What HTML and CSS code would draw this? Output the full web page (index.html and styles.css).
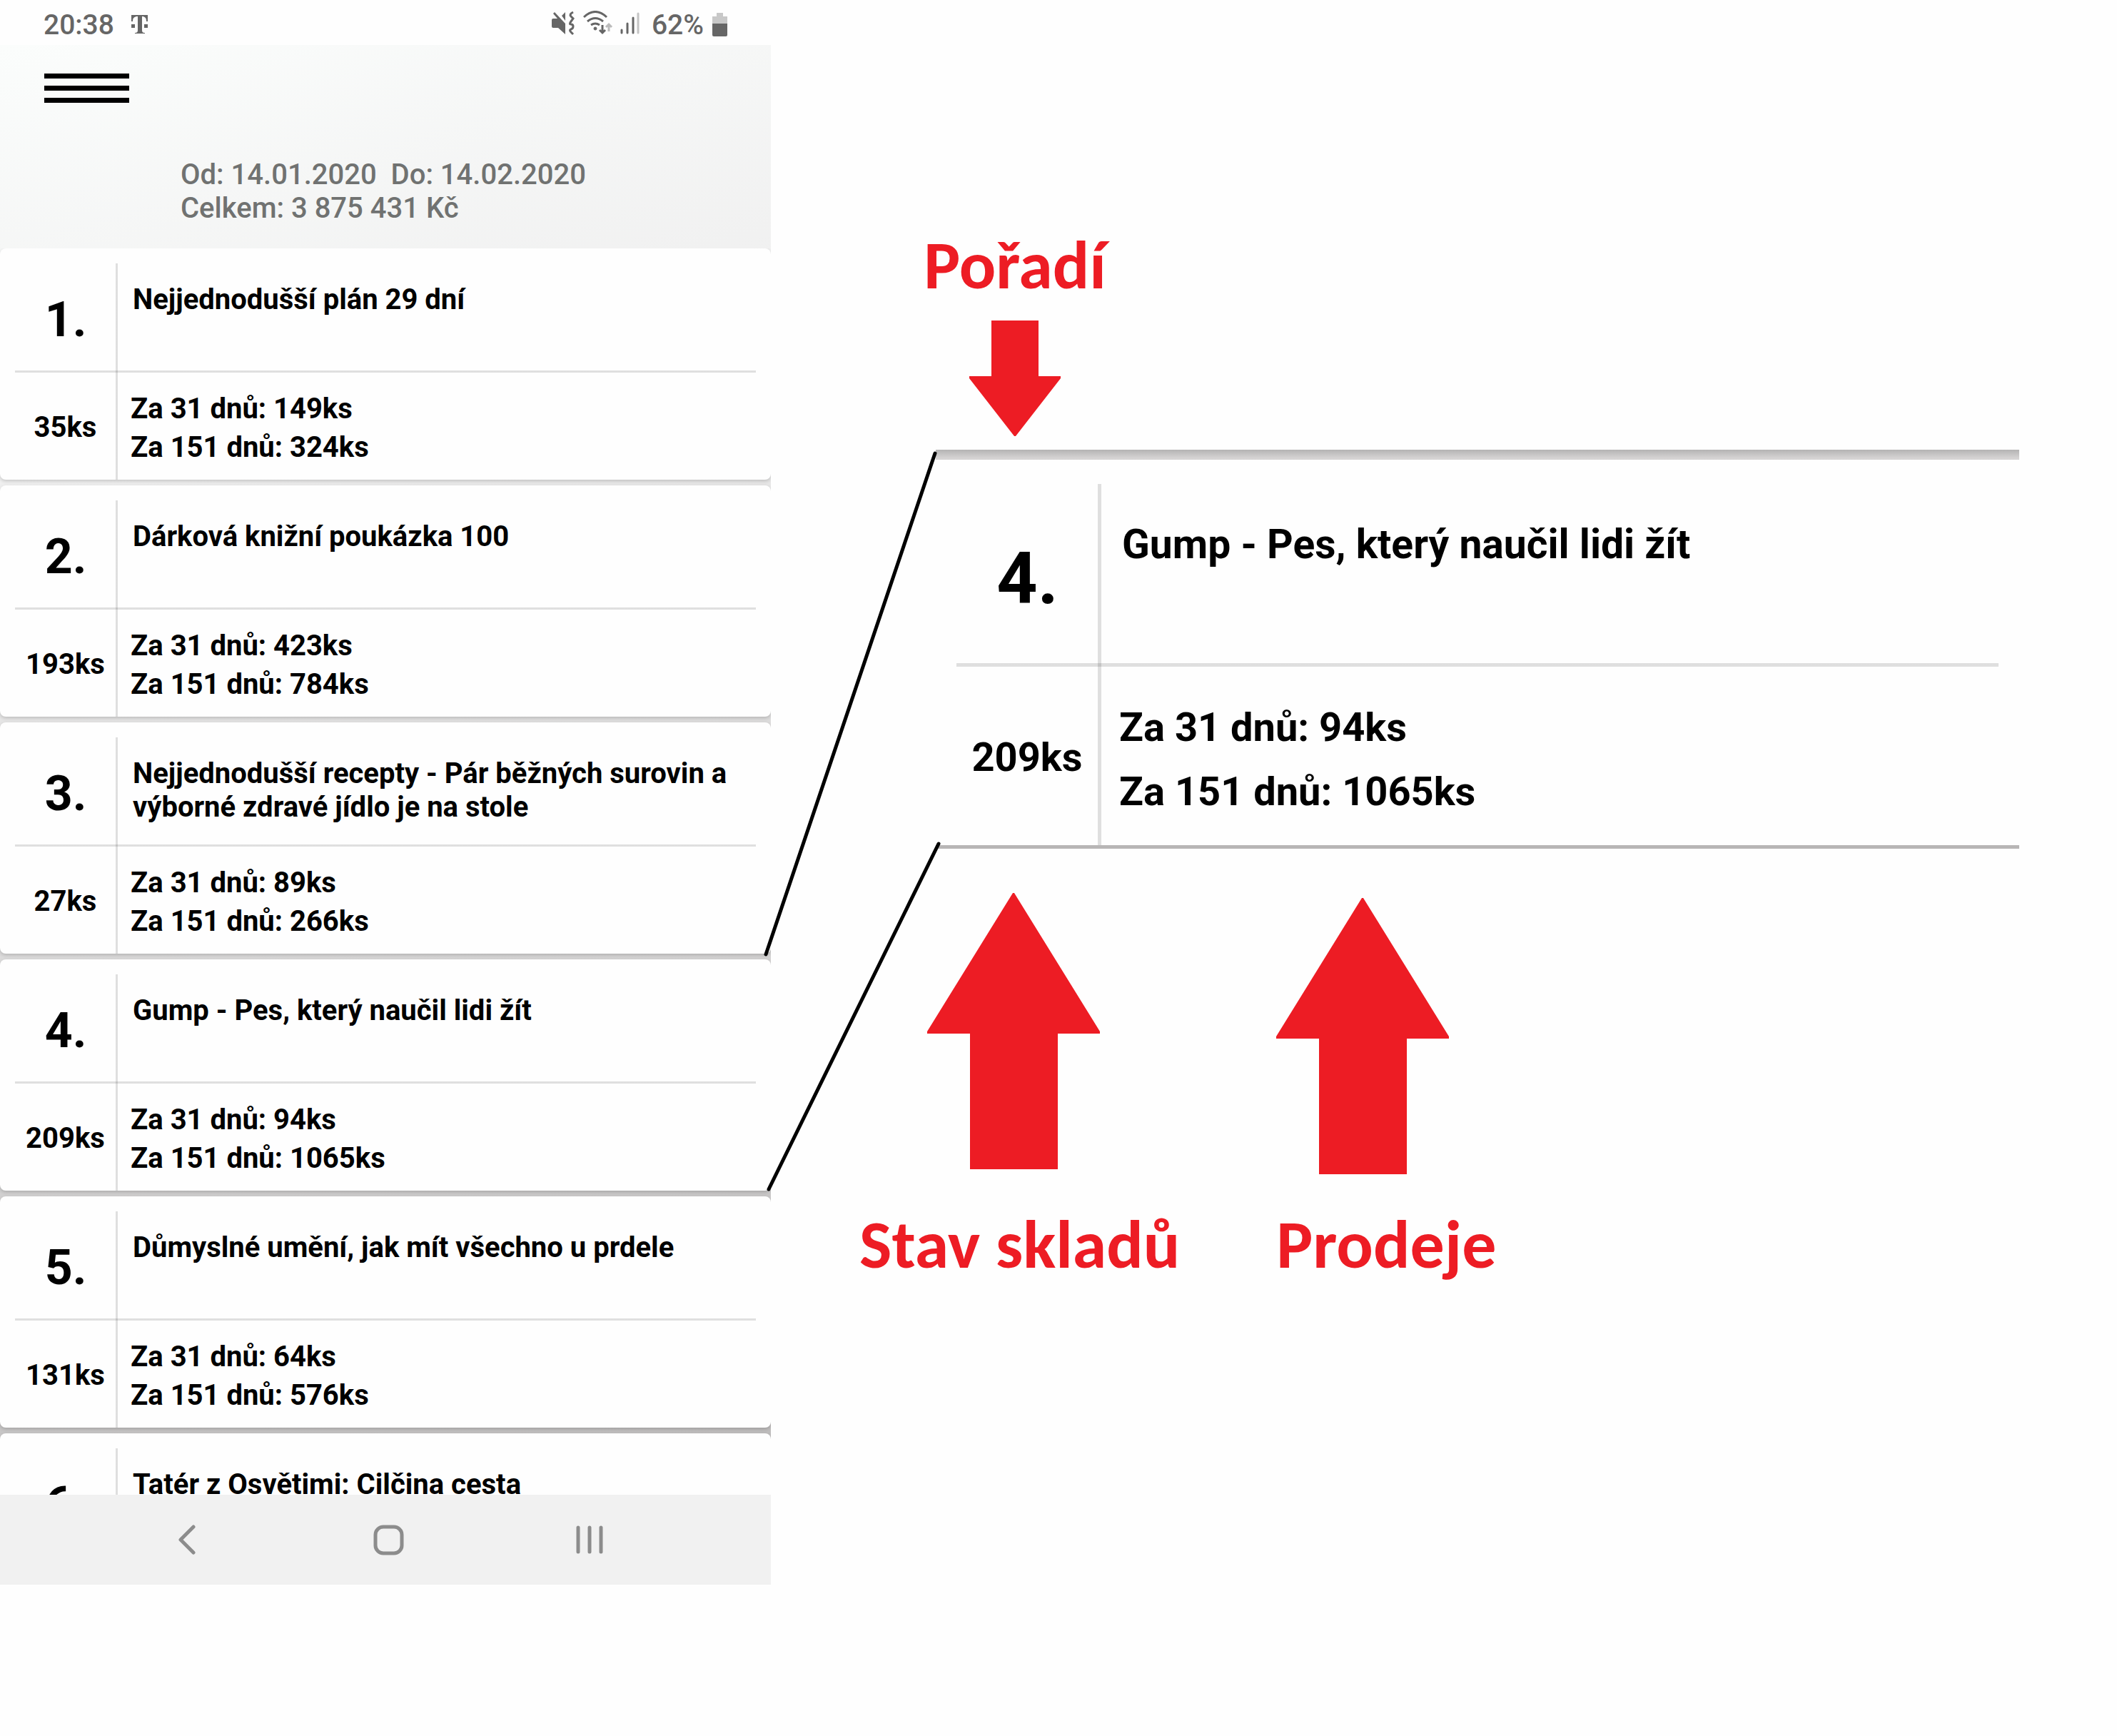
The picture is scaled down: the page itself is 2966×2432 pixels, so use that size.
FILE: index.html
```html
<!DOCTYPE html>
<html lang="cs">
<head>
<meta charset="utf-8">
<title>Prodeje</title>
<link rel="stylesheet" href="styles.css">
</head>
<body>
<main class="page">
  <section class="phone">
    <header class="status">
      <span>20:38</span>
      <svg class="carrier" width="24" height="28" viewBox="0 0 24 28" fill="#666"><path d="M0 0h23v9h-2c0-5-2-7-6-7v19c0 3 1 4 4 4v1H5v-1c3 0 4-1 4-4V2C4 2 2 4 2 9H0zM0 13h5v5H0zM18 13h5v5h-5z"/></svg>
      <div class="status-icons">
        <svg width="34" height="36" viewBox="0 0 34 36" fill="#666"><path d="M0 13q0-2 2-2h6L2 4l2-2 15 16v15L9 24H2q-2 0-2-2zM14 7l5-5v12z"/><path d="M30 2q-6 3-3 6t3 3-3 4 0 4 3 3-3 4 0 4l3 3" fill="none" stroke="#666" stroke-width="3"/></svg>
        <svg width="42" height="36" viewBox="0 0 42 36" fill="none" stroke="#666" stroke-width="3"><path d="M1 9Q17-6 33 9M6 15q11-9 22 0M11 20q6-4 12 0"/><circle cx="17" cy="25" r="2" fill="#666" stroke-width="1"/><path d="M27 20v11m-4-4 4 4 4-4"/><path d="M36 29V19m-4 4 4-4 4 4" stroke="#bbb"/></svg>
        <svg width="28" height="36" viewBox="0 0 28 36" fill="none" stroke="#666" stroke-width="3" stroke-linecap="round"><path d="M2 27v4M10 18v13M18 10v21"/><path d="M25 4v27" stroke="#c4c4c4"/></svg>
      </div>
      <span>62%</span>
      <svg class="battery" width="22" height="34" viewBox="0 0 22 34"><path d="M6 0h9v5h6v11H0V5h6z" fill="#c8c8c8"/><path d="M0 15h21v16q0 2-2 2H2q-2 0-2-2z" fill="#666"/></svg>
    </header>
    <div class="app">
      <div class="summary">
        <button class="menu" aria-label="Menu"><i></i><i></i><i></i></button>
        <p class="totals">Od: 14.01.2020&nbsp; Do: 14.02.2020<br>Celkem: 3 875 431 Kč</p>
      </div>
      <div class="list">
        <article class="card"><div class="rank">1.</div><h2 class="title">Nejjednodušší plán 29 dní</h2><div class="stock">35ks</div><p class="sales">Za 31 dnů: 149ks<br>Za 151 dnů: 324ks</p></article>
        <article class="card"><div class="rank">2.</div><h2 class="title">Dárková knižní poukázka 100</h2><div class="stock">193ks</div><p class="sales">Za 31 dnů: 423ks<br>Za 151 dnů: 784ks</p></article>
        <article class="card"><div class="rank">3.</div><h2 class="title">Nejjednodušší recepty - Pár běžných surovin a výborné zdravé jídlo je na stole</h2><div class="stock">27ks</div><p class="sales">Za 31 dnů: 89ks<br>Za 151 dnů: 266ks</p></article>
        <article class="card"><div class="rank">4.</div><h2 class="title">Gump - Pes, který naučil lidi žít</h2><div class="stock">209ks</div><p class="sales">Za 31 dnů: 94ks<br>Za 151 dnů: 1065ks</p></article>
        <article class="card"><div class="rank">5.</div><h2 class="title">Důmyslné umění, jak mít všechno u prdele</h2><div class="stock">131ks</div><p class="sales">Za 31 dnů: 64ks<br>Za 151 dnů: 576ks</p></article>
        <article class="card"><div class="rank">6.</div><h2 class="title">Tatér z Osvětimi: Cilčina cesta</h2></article>
      </div>
    </div>
    <nav class="navbar">
      <button aria-label="Zpět"><svg width="44" height="44" viewBox="0 0 44 44" fill="none" stroke="#8c8c8c" stroke-width="5" stroke-linecap="round" stroke-linejoin="round"><path d="M31 4 13 22l18 18"/></svg></button>
      <button aria-label="Domů"><svg width="44" height="44" viewBox="0 0 44 44" fill="none" stroke="#8c8c8c" stroke-width="5"><rect x="4" y="4" width="37" height="37" rx="11"/></svg></button>
      <button aria-label="Poslední aplikace"><svg width="44" height="44" viewBox="0 0 44 44" fill="none" stroke="#8c8c8c" stroke-width="5" stroke-linecap="round"><path d="M6 5v34M22 5v34M38 5v34"/></svg></button>
    </nav>
  </section>

  <section class="guide">
    <svg class="connectors" width="250" height="1042" viewBox="0 0 250 1042" fill="none" stroke="#000" stroke-width="5" stroke-linecap="round"><path d="M3 707 240 5M7 1036 245 552"/></svg>
    <div class="callout callout-top">
      <h1 class="label">Pořadí</h1>
      <svg width="128" height="162" viewBox="0 0 128 162" fill="#ed1c24"><path d="M31 0h66v78h31v3L65 162h-2L0 81v-3h31z"/></svg>
    </div>
    <article class="detail">
      <div class="rank">4.</div><h2 class="title">Gump - Pes, který naučil lidi žít</h2>
      <div class="stock">209ks</div><p class="sales">Za 31 dnů: 94ks<br>Za 151 dnů: 1065ks</p>
    </article>
    <div class="callouts">
      <div class="callout callout-stock">
        <svg width="242" height="388" viewBox="0 0 242 388" fill="#ed1c24"><path d="M120 0h2l120 194v3h-59v190H60V197H0v-3z"/></svg>
        <h1 class="label">Stav skladů</h1>
      </div>
      <div class="callout callout-sales">
        <svg width="242" height="388" viewBox="0 0 242 388" fill="#ed1c24"><path d="M120 0h2l120 194v3h-59v190H60V197H0v-3z"/></svg>
        <h1 class="label">Prodeje</h1>
      </div>
    </div>
  </section>
</main>
</body>
</html>
```
FILE: styles.css
```css
* { box-sizing: border-box; }
body { margin: 0; background: #fefefe; color: #000; font-family: Roboto, sans-serif; font-size: 40px; }
h1, h2, p { margin: 0; }
svg { display: block; flex: none; }
button { border: 0; padding: 0; background: none; }

.page { display: grid; grid-template-columns: minmax(0, 1080px) minmax(0, 1fr); align-items: start; }

.status { display: flex; align-items: center; height: 63px; padding: 6px 60px 0 61px; color: #666; font-size: 39px; font-weight: 500; }
.carrier { margin: 0 auto 0 24px; }
.status-icons { display: flex; gap: 10px; margin: 0 16px 4px 0; }
.battery { margin-left: 12px; }

.app { background: linear-gradient(165deg, #fbfdfc 0, #f0f0f0 580px, #bcbaba 100%); }
.summary { height: 285px; padding: 40px 62px 0; color: #707271; font-weight: 500; }
.menu { display: grid; gap: 10px; width: 119px; }
.menu i { height: 7px; background: #000; }
.totals { padding: 77px 0 0 191px; line-height: 47px; }

.list { display: grid; gap: 8px; height: 1746px; overflow: hidden; grid-auto-rows: 324px; }
.card, .detail {
  display: grid;
  background: linear-gradient(#0000001f, #0000001f) var(--line-x) var(--line-top) / var(--line-w) 100% no-repeat,
    linear-gradient(#0000001f, #0000001f) var(--inset) var(--line-y) / calc(100% - 2 * var(--inset)) var(--line-w) no-repeat, #fefefe;
  font-weight: 700;
}
.card {
  --line-x: 162px; --line-top: 21px; --line-w: 3px; --inset: 21px; --line-y: 171px;
  grid-template: 172px 152px / 162px minmax(0, 1fr);
  border-radius: 8px; box-shadow: 0 2px 5px #0000002e;
}
.rank { display: flex; align-items: center; justify-content: center; padding: 28px 0 0 22px; font-size: 68px; }
.title { padding: 48px 24px 0; font-size: 40px; line-height: 47px; }
.stock { display: flex; align-items: center; justify-content: center; padding: 4px 0 0 21px; }
.sales { padding: 26px 0 0 21px; line-height: 54px; }

.navbar { display: flex; justify-content: space-between; align-items: center; height: 126px; padding: 0 232px 0 240px; background: #f1f1f1; }

.guide { position: relative; padding: 322px 137px 0 231px; }
.connectors { position: absolute; left: -10px; top: 630px; }
.callout { display: flex; flex-direction: column; }
.callout-top { width: 256px; margin-left: -17px; align-items: center; height: 308px; }
.label { color: #ed1c24; font: 700 96px/100px Carlito, Lato, sans-serif; white-space: nowrap; }
.callout-top svg { margin-top: 27px; }
.detail {
  --line-x: 227px; --line-top: 34px; --line-w: 5px; --inset: 29px; --line-y: 285px;
  grid-template: 290px 250px / 227px minmax(0, 1fr);
  border: 0 solid #b8b6b6; border-width: 14px 0 5px;
  border-image: linear-gradient(#b4b3b3 0, #d6d4d4 12px, #b8b6b6 40px) 14 0 5;
  font-size: 56px;
}
.detail .rank { padding: 42px 0 0 30px; font-size: 100px; }
.detail .title { padding: 86px 34px 0; font-size: 57px; line-height: 66px; }
.detail .stock { padding: 4px 0 0 29px; }
.detail .sales { padding: 40px 0 0 30px; line-height: 90px; }
.callouts { display: flex; gap: 135px; height: 640px; padding-top: 62px; margin-left: -107px; }
.callout-stock svg { margin: 0 0 55px 95px; }
.callout-sales svg { margin: 7px 0 48px; }
```
